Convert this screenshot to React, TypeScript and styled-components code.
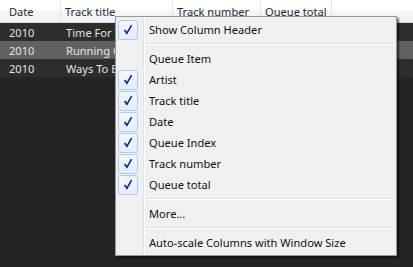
import React from 'react';
import styled, { createGlobalStyle } from 'styled-components';

const GlobalStyle = createGlobalStyle`
  html, body {
    margin: 0;
    padding: 0;
    background: #242424;
  }
  body {
    font-family: "Noto Sans", "Open Sans", sans-serif;
    font-size: 11.1px;
  }
`;

const Page = styled.div`
  position: relative;
  width: 413px;
  height: 267px;
  overflow: hidden;
  background: #242424;
`;

const COLS = '61px 112px 88px 71px 1fr';

const HeaderRow = styled.div`
  display: grid;
  grid-template-columns: ${COLS};
  height: 22px;
  background: linear-gradient(#ffffff 0%, #ffffff 45%, #f6f7f8 46%, #f1f2f3 100%);
  border-bottom: 1px solid #d6d6d6;
`;

const HeaderCell = styled.div<{ $first?: boolean; $last?: boolean }>`
  display: flex;
  align-items: center;
  padding-left: ${p => (p.$first ? '9px' : '4px')};
  border-right: ${p => (p.$last ? 'none' : '1px solid #e3e5e8')};
  color: #1e2a3a;
  white-space: nowrap;
  overflow: hidden;
`;

const Row = styled.div<{ $selected?: boolean }>`
  display: grid;
  grid-template-columns: ${COLS};
  height: 18px;
  background: ${p => (p.$selected ? '#616161' : '#2d2d2d')};
  color: #e4e4e4;
`;

const Cell = styled.div<{ $first?: boolean }>`
  display: flex;
  align-items: center;
  padding-left: ${p => (p.$first ? '9px' : '5px')};
  white-space: nowrap;
  overflow: hidden;
`;

const Menu = styled.div`
  position: absolute;
  left: 115px;
  top: 16px;
  width: 280px;
  padding: 2px 0;
  background: #f0f0f0;
  border: 1px solid #979797;
  box-shadow: 2px 2px 2px rgba(0, 0, 0, 0.55);
  color: #111;
  display: flex;
  flex-direction: column;
`;

const Gutter = styled.div`
  position: absolute;
  left: 27px;
  top: 0;
  bottom: 0;
  width: 1px;
  background: #e2e3e3;
  border-right: 1px solid #ffffff;
`;

const Item = styled.div`
  display: flex;
  align-items: center;
  height: 21px;
  position: relative;
`;

const CheckSlot = styled.div`
  width: 33px;
  height: 21px;
  display: flex;
  align-items: center;
  padding-left: 2px;
  box-sizing: border-box;
`;

const CheckBox = styled.div`
  width: 20px;
  height: 20px;
  box-sizing: border-box;
  border: 1px solid #a9cbf4;
  border-radius: 3px;
  background: linear-gradient(#f2f7fd, #e3eefb);
  display: flex;
  align-items: center;
  justify-content: center;
`;

const Label = styled.span`
  white-space: nowrap;
`;

const Separator = styled.div`
  height: 8px;
  display: flex;
  align-items: center;
  padding-left: 30px;
  padding-right: 2px;

  &::after {
    content: '';
    flex: 1;
    height: 1px;
    background: #e0e0e0;
    border-bottom: 1px solid #ffffff;
  }
`;

const Check = () => (
  <svg width="10" height="11" viewBox="0 0 10 11">
    <path d="M1.6 6 L3.9 9.3 L8.6 1.2" fill="none" stroke="#1418a8" strokeWidth="1.6" strokeLinejoin="miter" />
  </svg>
);

const MenuItem = ({ label, checked }: { label: string; checked?: boolean }) => (
  <Item>
    <CheckSlot>{checked && <CheckBox><Check /></CheckBox>}</CheckSlot>
    <Label>{label}</Label>
  </Item>
);

const rows = [
  { date: '2010', title: 'Time For Tea' },
  { date: '2010', title: 'Running Out', selected: true },
  { date: '2010', title: 'Ways To Be' },
];

export default function App() {
  return (
    <Page>
      <GlobalStyle />
      <HeaderRow>
        <HeaderCell $first>Date</HeaderCell>
        <HeaderCell>Track title</HeaderCell>
        <HeaderCell>Track number</HeaderCell>
        <HeaderCell>Queue total</HeaderCell>
        <HeaderCell $last />
      </HeaderRow>
      {rows.map((r, i) => (
        <Row key={i} $selected={r.selected}>
          <Cell $first>{r.date}</Cell>
          <Cell>{r.title}</Cell>
          <Cell />
          <Cell />
          <Cell />
        </Row>
      ))}
      <Menu>
        <Gutter />
        <MenuItem label="Show Column Header" checked />
        <Separator />
        <MenuItem label="Queue Item" />
        <MenuItem label="Artist" checked />
        <MenuItem label="Track title" checked />
        <MenuItem label="Date" checked />
        <MenuItem label="Queue Index" checked />
        <MenuItem label="Track number" checked />
        <MenuItem label="Queue total" checked />
        <Separator />
        <MenuItem label="More..." />
        <Separator />
        <MenuItem label="Auto-scale Columns with Window Size" />
      </Menu>
    </Page>
  );
}
